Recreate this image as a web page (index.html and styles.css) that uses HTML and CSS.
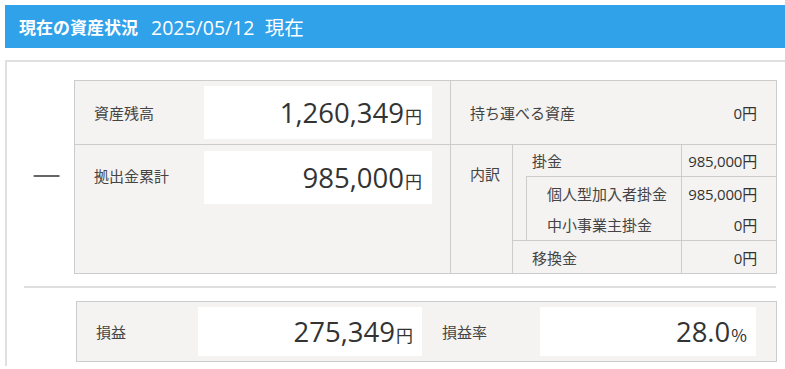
FILE: index.html
```html
<!DOCTYPE html>
<html lang="ja">
<head>
  <meta charset="UTF-8">
  <title>現在の資産状況</title>
  <meta name="viewport" content="width=device-width, initial-scale=1.0">
  <link rel="stylesheet" href="styles.css">
</head>
<body>
  <h2 class="page-head"><strong>現在の資産状況</strong><span class="as-of">2025/05/12&nbsp; 現在</span></h2>

  <div class="card">
    <div class="sum-line">
      <div class="op">—</div>
      <div class="sheet">
        <div class="sheet-left">
          <div class="cell">
            <span class="label">資産残高</span>
            <div class="amount">1,260,349<small>円</small></div>
          </div>
          <div class="cell cell-tall">
            <span class="label">拠出金累計</span>
            <div class="amount">985,000<small>円</small></div>
          </div>
        </div>
        <div class="sheet-right">
          <div class="portable">
            <span class="label">持ち運べる資産</span>
            <span class="yen">0円</span>
          </div>
          <div class="breakdown">
            <div class="bd-title">内訳</div>
            <div class="bd-list">
              <div class="bd-row bd-first">
                <span class="bd-name">掛金</span>
                <span class="bd-val">985,000円</span>
              </div>
              <div class="bd-sub">
                <div class="bd-row">
                  <span class="bd-name">個人型加入者掛金</span>
                  <span class="bd-val">985,000円</span>
                </div>
                <div class="bd-row bd-short">
                  <span class="bd-name">中小事業主掛金</span>
                  <span class="bd-val">0円</span>
                </div>
              </div>
              <div class="bd-row bd-last">
                <span class="bd-name">移換金</span>
                <span class="bd-val">0円</span>
              </div>
            </div>
          </div>
        </div>
      </div>
    </div>

    <hr class="rule">

    <div class="result">
      <span class="label">損益</span>
      <div class="amount amount-gain">275,349<small>円</small></div>
      <span class="label label-rate">損益率</span>
      <div class="amount amount-rate">28.0<small>%</small></div>
    </div>
  </div>
</body>
</html>
```

FILE: styles.css
```css
html, body {
  overflow: hidden;
}
body {
  margin: 0;
  padding: 5px 0 0 5px;
  font-family: "Open Sans", "Noto Sans CJK JP", sans-serif;
  color: #333;
  background: #fff;
}
.page-head {
  margin: 0;
  height: 43px;
  background: #30a2ea;
  color: #fff;
  display: flex;
  align-items: center;
  padding-left: 14px;
  font-weight: normal;
}
.page-head strong {
  font-family: "Noto Sans CJK JP", sans-serif;
  font-size: 17px;
  font-weight: bold;
  margin-right: 13px;
}
.as-of {
  font-size: 19.5px;
}

.card {
  margin-top: 12px;
  margin-right: -20px;
  border: 2px solid #e0e0e0;
  border-bottom: none;
  padding: 18px 0 0 17px;
  height: 286px;
}
.sum-line {
  display: flex;
}
.op {
  width: 50px;
  padding-top: 77px;
  text-align: center;
  font-size: 28px;
  line-height: 30px;
  color: #666;
  text-indent: -5px;
}

.sheet {
  width: 701px;
  display: flex;
  border: 1px solid #ccc;
  background: #f4f3f1;
}
.sheet-left {
  width: 375px;
  border-right: 1px solid #ccc;
}
.cell {
  display: flex;
  align-items: center;
  height: 63px;
  padding: 0 18px 0 19px;
  border-bottom: 1px solid #ccc;
}
.cell-tall {
  height: 128px;
  align-items: flex-start;
  padding-top: 6px;
  box-sizing: border-box;
  border-bottom: none;
}
.cell-tall .label {
  padding-top: 14px;
}
.label {
  font-family: "Noto Sans CJK JP", sans-serif;
  font-size: 15px;
  color: #444;
  white-space: nowrap;
}
.amount {
  margin-left: auto;
  background: #fff;
  text-align: right;
  white-space: nowrap;
  font-size: 27.5px;
  color: #333;
  box-sizing: border-box;
}
.amount small {
  font-family: "Noto Sans CJK JP", sans-serif;
  font-size: 17px;
  margin-left: 1px;
}
.sheet-left .amount {
  width: 228px;
  height: 53px;
  line-height: 53px;
  padding-right: 10px;
}

.sheet-right {
  flex: 1;
}
.portable {
  display: flex;
  align-items: center;
  justify-content: space-between;
  height: 63px;
  padding: 0 19px;
  border-bottom: 1px solid #ccc;
}
.yen, .bd-val {
  font-size: 15px;
  color: #333;
}
.breakdown {
  display: flex;
}
.bd-title {
  width: 62px;
  border-right: 1px solid #ccc;
  padding: 18px 0 0 19px;
  box-sizing: border-box;
  font-family: "Noto Sans CJK JP", sans-serif;
  font-size: 15px;
  color: #444;
}
.bd-list {
  flex: 1;
}
.bd-row {
  display: flex;
  height: 32px;
}
.bd-first, .bd-short {
  height: 31px;
}
.bd-name {
  flex: 1;
  display: flex;
  align-items: center;
  padding-left: 19px;
  font-family: "Noto Sans CJK JP", sans-serif;
  font-size: 15px;
  color: #444;
}
.bd-val {
  width: 95px;
  border-left: 1px solid #ccc;
  display: flex;
  align-items: center;
  justify-content: flex-end;
  padding-right: 19px;
  box-sizing: border-box;
  white-space: nowrap;
  letter-spacing: -0.2px;
}
.bd-sub {
  margin-left: 13px;
  border-left: 1px solid #ccc;
  border-top: 1px solid #ccc;
}
.bd-sub .bd-name {
  padding-left: 20px;
}
.bd-last {
  border-top: 1px solid #ccc;
}

.rule {
  margin: 12px 0 13px 0;
  width: 752px;
  height: 2px;
  border: none;
  background: #dedede;
}
.result {
  margin-left: 52px;
  width: 701px;
  height: 61px;
  display: flex;
  align-items: center;
  border: 1px solid #ccc;
  background: #f4f3f1;
  padding: 0 20px 0 19px;
  box-sizing: border-box;
}
.result .amount {
  height: 49px;
  line-height: 49px;
  padding-right: 9px;
}
.amount-gain {
  width: 224px;
  margin-left: 72px;
}
.label-rate {
  margin-left: 20px;
}
.amount-rate {
  width: 216px;
}
```
